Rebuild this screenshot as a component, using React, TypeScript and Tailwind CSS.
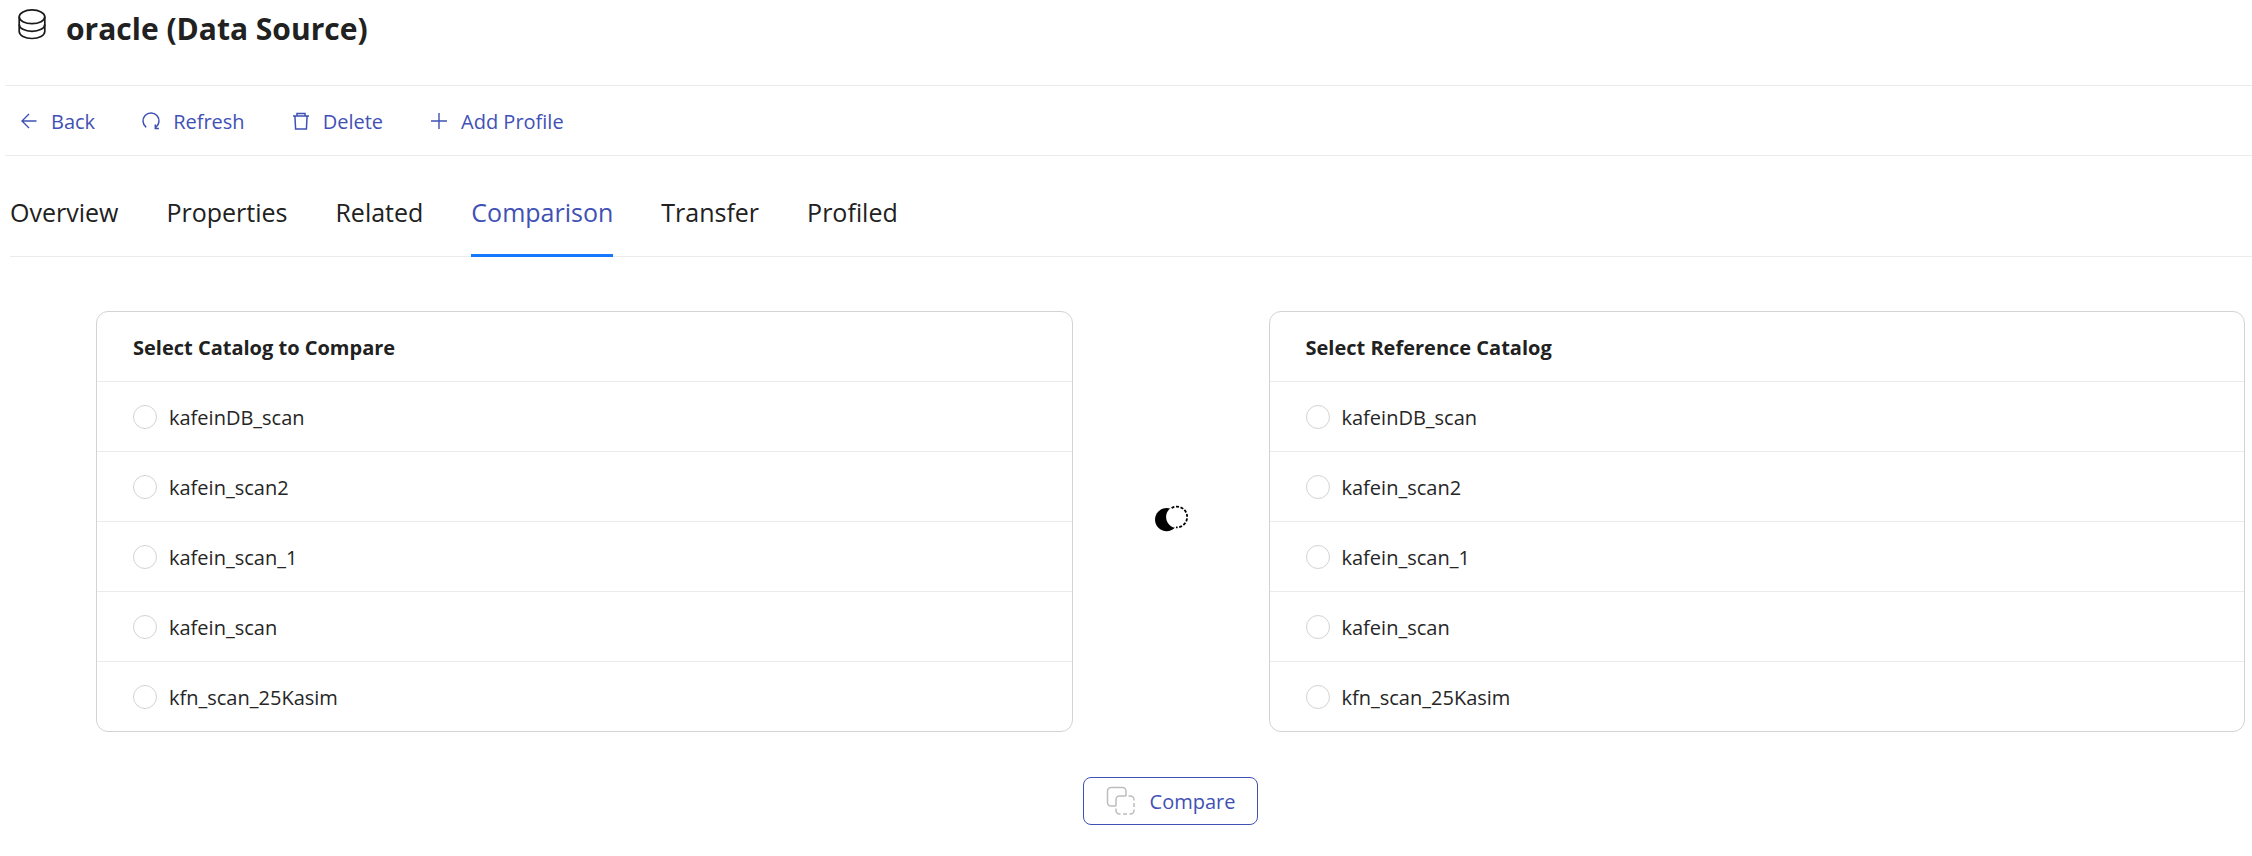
import { useState, type ReactNode } from "react";

const CATALOGS = ["kafeinDB_scan", "kafein_scan2", "kafein_scan_1", "kafein_scan", "kfn_scan_25Kasim"];
const TABS = ["Overview", "Properties", "Related", "Comparison", "Transfer", "Profiled"];

function DatabaseIcon() {
  return (
    <svg width="28" height="32" viewBox="0 0 28 32" fill="none" stroke="#1a1a1a" strokeWidth="1.7" aria-hidden="true">
      <ellipse cx="14" cy="8.8" rx="12.8" ry="6.9" />
      <path d="M1.2 8.800v14.800c0 3.800 5.700 6.900 12.800 6.900s12.800-3.100 12.800-6.900V8.800" />
      <path d="M1.2 16.400c0 3.800 5.700 6.900 12.800 6.900s12.800-3.100 12.800-6.900" />
    </svg>
  );
}

function BackIcon() {
  return (
    <svg width="20" height="20" viewBox="0 0 20 20" fill="none" stroke="currentColor" strokeWidth="1.4" aria-hidden="true">
      <path d="M17.500 10H3M10 2.900 3 10l7 7.100" />
    </svg>
  );
}

function RefreshIcon() {
  return (
    <svg width="20" height="20" viewBox="0 0 20 20" fill="none" stroke="currentColor" strokeWidth="1.5" aria-hidden="true">
      <path d="M5.200 16.300a8 8 0 1 1 9.600 0" />
      <path d="M14.300 13.500v4h3.600" />
    </svg>
  );
}

function DeleteIcon() {
  return (
    <svg width="20" height="20" viewBox="0 0 20 20" fill="none" stroke="currentColor" strokeWidth="1.5" aria-hidden="true">
      <path d="M2 5h16M6 5V2.400h8V5M3.900 5l.7 12.900h10.800L16.100 5" />
    </svg>
  );
}

function AddIcon() {
  return (
    <svg width="20" height="20" viewBox="0 0 20 20" fill="none" stroke="currentColor" strokeWidth="1.4" aria-hidden="true">
      <path d="M2 10h16M10 2v16" />
    </svg>
  );
}

function OverlapIcon() {
  return (
    <svg width="36" height="28" viewBox="0 0 36 28" aria-hidden="true">
      <circle cx="13.6" cy="15.6" r="11.6" fill="#000" />
      <circle cx="24" cy="13" r="10.9" fill="#fff" />
      <path d="M18.600 4A10.400 10.400 0 1 1 23 23.400" fill="none" stroke="#000" strokeWidth="1.8" strokeDasharray="3 1.6" />
    </svg>
  );
}

function CompareIcon() {
  return (
    <svg width="30" height="30" viewBox="0 0 30 30" fill="none" stroke="#bdbdbd" strokeWidth="1.5" aria-hidden="true">
      <path d="M10 20H5a3.5 3.5 0 0 1-3.5-3.5V5A3.5 3.5 0 0 1 5 1.500h11.500A3.500 3.500 0 0 1 20 5v5" />
      <path d="M20 10h-6.500A3.500 3.500 0 0 0 10 13.500V20" />
      <path d="M22.500 10h2a3.500 3.500 0 0 1 3.500 3.500v1M28 17v4M28 23.500v1a3.500 3.500 0 0 1-3.500 3.500h-1M21 28h-4M14.500 28h-1a3.500 3.500 0 0 1-3.500-3.500V22.500" />
    </svg>
  );
}

function Command({ icon, label }: { icon: ReactNode; label: string }) {
  return (
    <button type="button" className="flex items-center gap-3 text-[20px] leading-8 text-[#3f51b5]">
      {icon}
      <span className="pt-0.5">{label}</span>
    </button>
  );
}

function CatalogList({ title, name }: { title: string; name: string }) {
  return (
    <fieldset className="min-w-0 rounded-xl border border-[#d3d3d3]" aria-label={title}>
      <h2 className="flex h-[69px] items-center px-9 pt-0.5 text-[20px] font-bold text-[#212121]">{title}</h2>
      {CATALOGS.map((catalog) => (
        <label key={catalog} className="flex h-[70px] cursor-pointer items-center gap-3 border-t border-[#ebebeb] px-9 text-[20px] text-[#262626]">
          <input
            type="radio"
            name={name}
            value={catalog}
            className="size-6 appearance-none rounded-full border border-[#d3d3d3] bg-white checked:border-[7px] checked:border-[#1677ff]"
          />
          <span className="pt-0.5">{catalog}</span>
        </label>
      ))}
    </fieldset>
  );
}

export default function App() {
  const [active, setActive] = useState("Comparison");

  return (
    <main className="min-h-screen bg-white font-['Open_Sans','Noto_Sans',sans-serif] text-[#212121]">
      <header className="flex h-[85px] items-start gap-5 pt-2 pl-[18px]">
        <DatabaseIcon />
        <h1 className="text-[30px] leading-[42px] font-bold">oracle (Data Source)</h1>
      </header>

      <div className="ml-[5px] flex h-[71px] items-center gap-[46px] border-y border-[#ebebeb] pl-[14px]">
        <Command icon={<BackIcon />} label="Back" />
        <Command icon={<RefreshIcon />} label="Refresh" />
        <Command icon={<DeleteIcon />} label="Delete" />
        <Command icon={<AddIcon />} label="Add Profile" />
      </div>

      <nav role="tablist" className="ml-[10px] flex h-[101px] gap-12 border-b border-[#ebebeb]">
        {TABS.map((tab) => (
          <button
            key={tab}
            type="button"
            role="tab"
            aria-selected={tab === active}
            onClick={() => setActive(tab)}
            className={
              tab === active
                ? "-mb-px border-b-3 border-[#1677ff] pt-6 pb-2 text-[25px] text-[#3f51b5]"
                : "-mb-px border-b-3 border-transparent pt-6 pb-2 text-[25px]"
            }
          >
            {tab}
          </button>
        ))}
      </nav>

      <section className="grid grid-cols-[1fr_196px_1fr] items-center pt-[54px] pr-[7px] pl-24">
        <CatalogList title="Select Catalog to Compare" name="catalog" />
        <div className="flex justify-center pb-2">
          <OverlapIcon />
        </div>
        <CatalogList title="Select Reference Catalog" name="reference" />
        <button
          type="button"
          className="col-start-2 mt-[45px] flex h-12 items-center gap-[14px] justify-self-center rounded-lg border border-[#3f51b5] px-[22px] text-[20px] text-[#3f51b5]"
        >
          <CompareIcon />
          <span className="pt-0.5">Compare</span>
        </button>
      </section>
    </main>
  );
}
